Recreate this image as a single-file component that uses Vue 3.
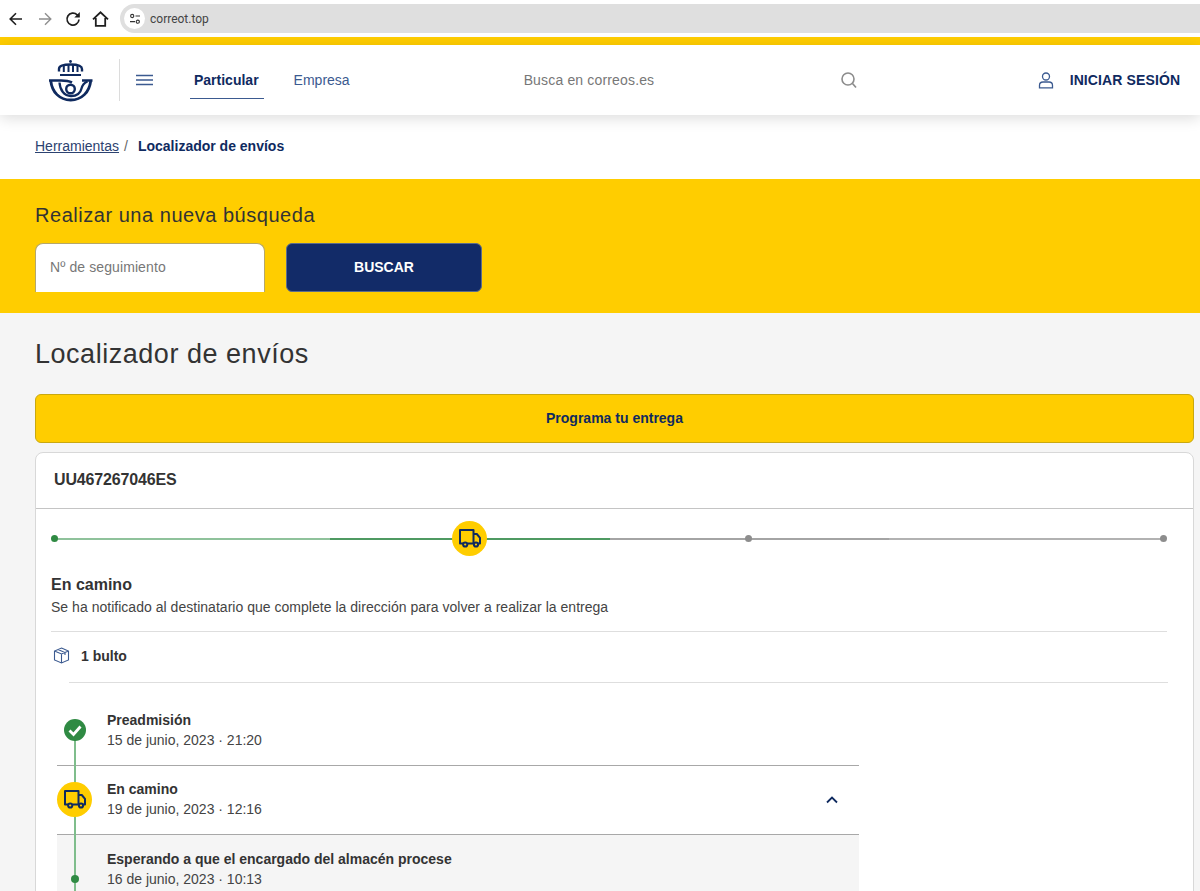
<script setup>
const events = [
  { title: 'Preadmisión', date: '15 de junio, 2023 · 21:20', kind: 'check' },
  { title: 'En camino', date: '19 de junio, 2023 · 12:16', kind: 'truck', open: true },
]
</script>

<template>
  <div class="page">
    <div class="chrome">
      <svg class="nav-ic" width="16" height="16" viewBox="0 0 16 16"><path d="M14 8H2.500M8 2.200 2.200 8 8 13.800" fill="none" stroke="#1f1f1f" stroke-width="1.600"/></svg>
      <svg class="nav-ic fwd" width="16" height="16" viewBox="0 0 16 16"><path d="M2 8h11.500M8 2.200 13.800 8 8 13.800" fill="none" stroke="#8f8f8f" stroke-width="1.400"/></svg>
      <svg class="nav-ic reload" width="16" height="16" viewBox="0 0 16 16"><path d="M14 8.500a6 6 0 1 1-1.800-4.700L14 5.500" fill="none" stroke="#1f1f1f" stroke-width="1.700"/><path d="M14.800 1v5.500H9.300z" fill="#1f1f1f"/></svg>
      <svg class="nav-ic home" width="17" height="16" viewBox="0 0 17 16"><path d="M1 8.300 8.500 1.300 16 8.300M3.800 7v7.800h9.400V7" fill="none" stroke="#1f1f1f" stroke-width="1.800"/></svg>
      <div class="omnibox">
        <span class="site-ic">
          <svg width="12" height="12" viewBox="0 0 12 12"><circle cx="3.200" cy="3" r="1.600" fill="none" stroke="#333" stroke-width="1.100"/><path d="M6.500 3H11M1 8.700h5" stroke="#333" stroke-width="1.200"/><circle cx="8.800" cy="8.700" r="1.600" fill="none" stroke="#333" stroke-width="1.100"/></svg>
        </span>
        <span class="url">correot.top</span>
      </div>
    </div>
    <div class="strip"></div>

    <header class="top">
      <svg class="logo" width="44" height="44" viewBox="0 0 44 44" fill="none" stroke="#0f2a5f">
        <circle cx="21.500" cy="2.500" r="1.400" fill="#0f2a5f" stroke="none"/>
        <path d="M10 12.500V10c0-3.200 4-4.500 11.500-4.500S33 6.800 33 10v2.500" stroke-width="2.400"/>
        <path d="M14.800 6.500v6.500M19.500 6v7M24 6v7M28.500 6.500v6.500" stroke-width="2"/>
        <path d="M11 16h21" stroke-width="2"/>
        <path d="M0 21.500h12c4 0 8 .5 11 2M43.500 21.500H33" stroke-width="2.600"/>
        <path d="M1.800 22C3 33 10.500 41 21.700 41s18.700-8 20-19" stroke-width="2.800"/>
        <path d="M10.500 23.500c.5 7.500 4.500 13.500 11.500 13.500 5.500 0 9.500-3 10.500-7.500.7-3 2.500-5.500 6-7" stroke-width="2.300"/>
        <circle cx="21.500" cy="30" r="4.300" stroke-width="2.400"/>
      </svg>
      <span class="vsep"></span>
      <svg class="burger" width="17" height="12" viewBox="0 0 17 12"><path d="M0 1.500h17M0 6h17M0 10.500h17" stroke="#3b5a90" stroke-width="1.500"/></svg>
      <nav class="tabs">
        <a class="tab active">Particular</a>
        <a class="tab">Empresa</a>
      </nav>
      <div class="search">
        <span>Busca en correos.es</span>
        <svg width="18" height="18" viewBox="0 0 18 18"><circle cx="8" cy="8" r="6" fill="none" stroke="#8c8c8c" stroke-width="1.600"/><path d="m12.500 12.500 3.500 4" stroke="#8c8c8c" stroke-width="1.600"/></svg>
      </div>
      <div class="login">
        <svg width="16" height="17" viewBox="0 0 16 17" fill="none" stroke="#3b5a90" stroke-width="1.300"><circle cx="8" cy="4.500" r="3.500"/><path d="M1.500 15.800v-2.300c0-2 1.500-3.500 3.500-3.500h6c2 0 3.500 1.500 3.500 3.500v2.300z"/></svg>
        <span>INICIAR SESIÓN</span>
      </div>
    </header>

    <div class="crumbs">
      <a>Herramientas</a><span class="slash">/</span><strong>Localizador de envíos</strong>
    </div>

    <section class="band">
      <h2>Realizar una nueva búsqueda</h2>
      <div class="form">
        <div class="field">Nº de seguimiento</div>
        <button class="go">BUSCAR</button>
      </div>
    </section>

    <main class="main">
      <h1>Localizador de envíos</h1>
      <button class="cta">Programa tu entrega</button>
      <div class="card">
        <div class="code">UU467267046ES</div>
        <div class="body">
          <div class="stepper">
            <span class="seg s1"></span>
            <span class="seg s2"></span>
            <span class="seg s3"></span>
            <span class="seg s4"></span>
            <span class="dot green d0"></span>
            <span class="badge b1">
              <svg width="22" height="19" viewBox="0 0 22 19" fill="none" stroke="#0f2a5f" stroke-width="2" stroke-linejoin="round"><path d="M4 14.500H1V1h13.500v13.500H8.500M14.500 5h3.300L21 8.800v5.700h-1.800M14.500 14.500H15"/><circle cx="6.200" cy="15.500" r="2.100"/><circle cx="17" cy="15.500" r="2.100"/></svg>
            </span>
            <span class="dot gray d2"></span>
            <span class="dot gray d3"></span>
          </div>
          <h3>En camino</h3>
          <p class="note">Se ha notificado al destinatario que complete la dirección para volver a realizar la entrega</p>
          <div class="packs">
            <svg width="17" height="17" viewBox="0 0 17 17" fill="none" stroke="#3b5a90" stroke-width="1.100"><path d="M8.500 1 15.500 4v9l-7 3-7-3V4zM1.500 4l7 3 7-3M8.500 7v9M5 2.500l7 3v2.500"/></svg>
            <strong>1 bulto</strong>
          </div>
          <div class="rule"></div>
          <div class="timeline">
            <span class="rail"></span>
            <div v-for="e in events" :key="e.title" class="event">
              <span v-if="e.kind === 'check'" class="mark check">
                <svg width="22" height="22" viewBox="0 0 22 22"><circle cx="11" cy="11" r="11" fill="#2f8a43"/><path d="m5.500 11.500 4 4 7-8" fill="none" stroke="#fff" stroke-width="2.800"/></svg>
              </span>
              <span v-else class="mark truck">
                <svg width="22" height="19" viewBox="0 0 22 19" fill="none" stroke="#0f2a5f" stroke-width="2" stroke-linejoin="round"><path d="M4 14.500H1V1h13.500v13.500H8.500M14.500 5h3.300L21 8.800v5.700h-1.800M14.500 14.500H15"/><circle cx="6.200" cy="15.500" r="2.100"/><circle cx="17" cy="15.500" r="2.100"/></svg>
              </span>
              <div class="ev-text">
                <strong>{{ e.title }}</strong>
                <span>{{ e.date }}</span>
              </div>
              <svg v-if="e.open" class="chev" width="12" height="8" viewBox="0 0 12 8"><path d="m1 6.500 5-5 5 5" fill="none" stroke="#0f2a5f" stroke-width="1.800"/></svg>
            </div>
            <div class="event sub">
              <span class="mini"></span>
              <div class="ev-text">
                <strong>Esperando a que el encargado del almacén procese</strong>
                <span>16 de junio, 2023 · 10:13</span>
              </div>
            </div>
          </div>
        </div>
      </div>
    </main>
  </div>
</template>

<style>
html, body { margin: 0; background: #f5f5f5; }
</style>

<style scoped>
.page { height: 891px; overflow: hidden; font-family: "Liberation Sans", Arial, sans-serif; color: #333; background: #f5f5f5; }
.chrome { height: 37px; box-sizing: border-box; padding: 4px 0 4px 8px; background: #fff; display: flex; align-items: center; }
.nav-ic { flex: none; }
.fwd { margin-left: 13px; }
.reload { margin-left: 12px; }
.home { margin-left: 11px; }
.omnibox { margin-left: 11px; flex: 1; height: 29px; border-radius: 15px 0 0 15px; background: #dfdfdf; display: flex; align-items: center; padding-left: 4px; }
.site-ic { width: 21px; height: 21px; border-radius: 50%; background: #fff; display: flex; align-items: center; justify-content: center; }
.url { margin-left: 5px; font: 12px "Roboto", sans-serif; color: #444; }
.strip { height: 8px; background: #ffcd00; }

.top { position: relative; height: 70px; background: #fff; display: flex; align-items: center; padding-left: 49px; box-shadow: 0 3px 14px rgba(0,0,0,.14); z-index: 1; }
.logo { flex: none; margin-top: 2px; }
.vsep { width: 1px; height: 42px; margin-left: 26px; background: #dcdcdc; }
.burger { margin-left: 16px; flex: none; }
.tabs { display: flex; margin-left: 41px; gap: 35px; height: 100%; align-items: center; }
.tab { font-size: 14px; color: #3b5a90; position: relative; }
.tab.active { color: #0f2a5f; font-weight: 700; }
.tab.active::after { content: ""; position: absolute; left: -4px; right: -5px; top: 26px; height: 1px; background: #3b5a90; }
.search { width: 334px; margin-left: 174px; display: flex; justify-content: space-between; align-items: center; font-size: 14px; letter-spacing: .16px; color: #777; }
.login { display: flex; align-items: center; gap: 16px; margin-left: 180px; font-size: 14px; font-weight: 700; color: #0f2a5f; letter-spacing: .12px; }

.crumbs { height: 64px; box-sizing: border-box; padding: 23px 35px 0; background: #fff; font-size: 14px; line-height: 16px; color: #0f2a5f; }
.crumbs a { text-decoration: underline; color: #2c4270; }
.slash { margin: 0 10px 0 5px; color: #666; }
.crumbs strong { color: #0f2a5f; }

.band { height: 134px; box-sizing: border-box; padding: 24px 35px 0; background: #ffcd00; }
.band h2 { margin: 0; font-size: 20px; line-height: 24px; font-weight: 400; color: #333; letter-spacing: .53px; }
.form { display: flex; gap: 21px; margin-top: 16px; }
.field { width: 230px; height: 49px; box-sizing: border-box; padding: 0 14px; border: 1px solid #b5a76a; border-bottom: 0; border-radius: 8px 8px 0 0; background: #fff; font-size: 14px; line-height: 47px; letter-spacing: .1px; color: #777; }
.go { width: 196px; height: 49px; padding-bottom: 2px; border: 1px solid #5c6c8c; border-radius: 6px; background: #122b68; color: #fff; font: 700 14px "Liberation Sans", sans-serif; }

.main { padding: 0 6px 0 35px; }
h1 { margin: 0; padding-top: 25px; font-size: 27px; line-height: 32px; font-weight: 400; color: #333; letter-spacing: .53px; }
.cta { display: block; width: 100%; height: 49px; margin-top: 24px; padding-bottom: 2px; border: 1px solid #c9a80f; border-radius: 6px; background: #ffcd00; color: #0f2a5f; font: 700 14px "Liberation Sans", sans-serif; }
.card { margin-top: 9px; background: #fff; border: 1px solid #d8d8d8; border-radius: 8px 8px 0 0; }
.code { height: 56px; box-sizing: border-box; padding: 18px 18px 0; border-bottom: 1px solid #c4c4c4; font-size: 16px; line-height: 18px; font-weight: 700; letter-spacing: -.15px; color: #333; }
.body { padding: 0 26px 0 15px; }
.stepper { position: relative; height: 61px; }
.seg { position: absolute; top: 29px; height: 2px; }
.s1 { left: 3px; width: 276px; background: #8fc29b; }
.s2 { left: 279px; width: 280px; background: #4f9a62; }
.s3 { left: 559px; width: 279px; background: #a4a4a4; }
.s4 { left: 838px; width: 275px; background: #b2b2b2; }
.dot { position: absolute; top: 26px; width: 7px; height: 7px; border-radius: 50%; }
.dot.green { background: #2f8a43; }
.dot.gray { background: #8d8d8d; }
.d0 { left: 0; }
.d2 { left: 693.500px; }
.d3 { left: 1108.500px; }
.badge { position: absolute; left: 401px; top: 12px; width: 35px; height: 35px; border-radius: 50%; background: #ffcd00; display: flex; align-items: center; justify-content: center; }
h3 { margin: 0; padding-top: 5px; font-size: 16px; line-height: 20px; font-weight: 700; color: #333; }
.note { margin: 4px 0 0; font-size: 14px; line-height: 16px; letter-spacing: .025px; color: #444; }
.packs { margin-top: 16px; height: 51px; padding: 0 0 3px 2px; box-sizing: border-box; border-top: 1px solid #dedede; display: flex; align-items: center; gap: 11px; font-size: 14px; color: #333; }
.rule { margin-left: 18px; margin-right: -1px; height: 1px; background: #dedede; }
.timeline { position: relative; margin: 14px 0 0 6px; width: 802px; }
.rail { position: absolute; left: 17px; top: 30px; width: 2px; height: 300px; background: #7fbd8c; z-index: 2; }
.event { position: relative; height: 69px; padding: 0 21px 0 50px; box-sizing: border-box; display: flex; justify-content: space-between; align-items: center; border-bottom: 1px solid #a8a8a8; }
.event.sub { background: #f5f5f5; border-bottom: 0; padding-top: 2px; }
.ev-text { display: flex; flex-direction: column; gap: 3px; font-size: 14px; line-height: 17px; color: #444; margin-top: -2px; }
.ev-text strong { color: #333; }
.mark { position: absolute; z-index: 3; display: flex; align-items: center; justify-content: center; border-radius: 50%; }
.check { left: 7px; top: 22px; width: 22px; height: 22px; }
.truck { left: 0; top: 16px; width: 35px; height: 35px; background: #ffcd00; }
.mini { position: absolute; left: 14px; top: 40px; width: 8px; height: 8px; border-radius: 50%; background: #2f8a43; z-index: 3; }
</style>
